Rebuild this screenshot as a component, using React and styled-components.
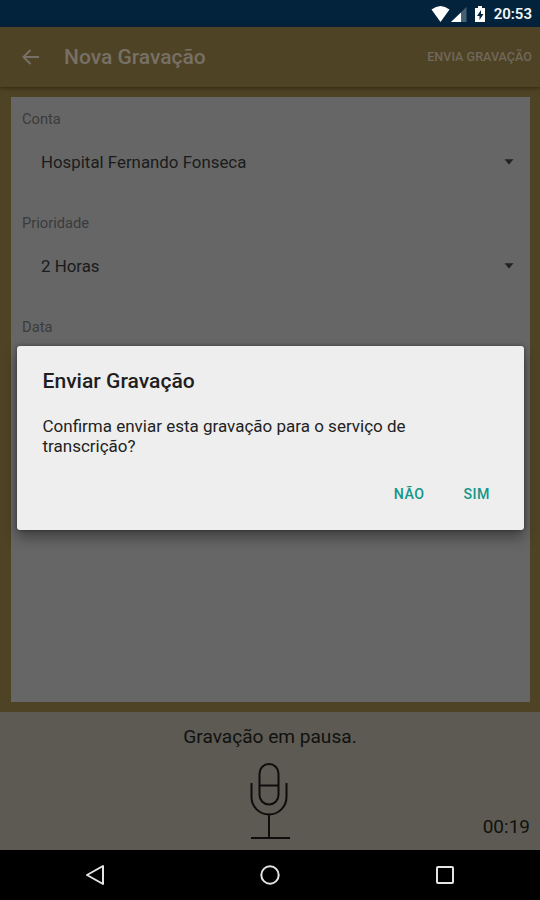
import React from "react";
import styled, { createGlobalStyle } from "styled-components";

const GlobalStyle = createGlobalStyle`
  * { box-sizing: border-box; }
  body { margin: 0; background: #000; font-family: Roboto, sans-serif; }
`;

const Screen = styled.div`
  position: relative;
  width: 540px;
  height: 900px;
  display: flex;
  flex-direction: column;
  overflow: hidden;
  background: #4f4325;
`;

const StatusBar = styled.div`
  flex: none;
  height: 27px;
  display: flex;
  align-items: center;
  justify-content: flex-end;
  padding: 1px 8px 0 0;
  background: #03233d;
`;

const StatusIcons = styled.svg`
  display: block;
  margin-right: 7px;
`;

const Clock = styled.span`
  font-size: 15px;
  font-weight: 600;
  line-height: 20px;
  color: #f4f6f7;
  white-space: nowrap;
`;

const AppBar = styled.header`
  flex: none;
  height: 60px;
  display: flex;
  align-items: center;
  padding: 0 8px 0 22px;
  background: #4f4325;
  box-shadow: 0 1px 4px rgba(30, 22, 4, 0.65);
`;

const BackIcon = styled.svg`
  flex: none;
  margin-right: 25px;
`;

const Title = styled.h1`
  margin: 0;
  flex: 1;
  font-size: 21px;
  font-weight: 500;
  line-height: 28px;
  color: #777066;
`;

const SendAction = styled.button`
  border: 0;
  padding: 0;
  background: none;
  font: 500 12.6px/18px Roboto, sans-serif;
  color: #70685b;
`;

const Card = styled.main`
  flex: none;
  height: 605px;
  margin: 10px 10.5px 10px 11px;
  padding: 12px 16px 0 11px;
  background: #666;
`;

const Field = styled.section`
  height: 104px;
`;

const Label = styled.div`
  font-size: 14.7px;
  line-height: 21px;
  color: #3b3b3b;
`;

const Select = styled.div`
  display: flex;
  align-items: center;
  justify-content: space-between;
  padding: 0 0 0 19px;
  margin-top: 20px;
  height: 24px;
  font-size: 16.85px;
  color: #1b1b1b;
`;

const Recorder = styled.footer`
  flex: none;
  height: 138px;
  display: grid;
  grid-template-columns: 1fr 76px 1fr;
  grid-template-rows: 50px 88px;
  background: #5c5a53;
`;

const RecorderStatus = styled.div`
  grid-column: 1 / -1;
  text-align: center;
  font-size: 19.1px;
  line-height: 50px;
  color: #11110f;
`;

const MicIcon = styled.svg`
  grid-column: 2;
  display: block;
`;

const Elapsed = styled.div`
  align-self: end;
  text-align: right;
  padding: 0 10px 11px 0;
  font-size: 19px;
  line-height: 24px;
  color: #11110f;
`;

const NavBar = styled.nav`
  flex: none;
  height: 50px;
  display: grid;
  grid-template-columns: 1fr 1fr 1fr;
  place-items: center;
  padding: 0 7px 0 7px;
  background: #000;
`;

const Dialog = styled.div`
  position: absolute;
  left: 17px;
  top: 346px;
  width: 507px;
  height: 184px;
  padding: 22px 20px 0 25.5px;
  border-radius: 3px;
  background: #eee;
  box-shadow: 0 8px 14px rgba(0, 0, 0, 0.35), 0 0 4px rgba(0, 0, 0, 0.4);
`;

const DialogTitle = styled.h2`
  margin: 0;
  font-size: 21.1px;
  font-weight: 500;
  line-height: 26px;
  color: #1e1e1e;
`;

const DialogText = styled.p`
  margin: 21.5px 0 0;
  width: 400px;
  font-size: 17px;
  line-height: 20px;
  color: #222;
`;

const DialogActions = styled.div`
  display: flex;
  justify-content: flex-end;
  gap: 11px;
  margin-top: 20.5px;
`;

const DialogButton = styled.button`
  border: 0;
  padding: 8px 14px;
  background: none;
  font: 500 14.2px/20px Roboto, sans-serif;
  letter-spacing: 0.5px;
  color: #159688;
`;

const Caret = () => (
  <svg width="10" height="6" viewBox="0 0 10 6">
    <path d="M.5.3h9L5 5.5z" fill="#222" />
  </svg>
);

const fields = [
  { label: "Conta", value: "Hospital Fernando Fonseca" },
  { label: "Prioridade", value: "2 Horas" },
  { label: "Data" },
];

export default function App() {
  return (
    <Screen>
      <GlobalStyle />
      <StatusBar>
        <StatusIcons width="56" height="20" viewBox="0 0 56 20">
          <path d="M.5 5.5Q9.5-1.5 18.5 5.5L9.5 18z" fill="#fff" />
          <path d="M35.5 3v15H20z" fill="#456176" />
          <path d="M30 8.5V18H20z" fill="#fff" />
          <path d="M47 2h4v2h3v14H44V4h3z" fill="#fff" />
          <path d="M50 6l-4 6h2.5v4l4-6H50z" fill="#03233d" />
        </StatusIcons>
        <Clock>20:53</Clock>
      </StatusBar>
      <AppBar>
        <BackIcon width="17" height="16" viewBox="0 0 17 16" fill="none" stroke="#777066" strokeWidth="2">
          <path d="M17 8H1.5M8.5 1l-7 7 7 7" />
        </BackIcon>
        <Title>Nova Gravação</Title>
        <SendAction>ENVIA GRAVAÇÃO</SendAction>
      </AppBar>
      <Card>
        {fields.map(({ label, value }) => (
          <Field key={label}>
            <Label>{label}</Label>
            {value && (
              <Select>
                {value}
                <Caret />
              </Select>
            )}
          </Field>
        ))}
      </Card>
      <Recorder>
        <RecorderStatus>Gravação em pausa.</RecorderStatus>
        <MicIcon width="76" height="88" viewBox="232 762 76 88" fill="none" stroke="#0d0d0c" strokeWidth="2">
          <rect x="259.5" y="764" width="19" height="40.5" rx="9.5" />
          <path d="M259.5 785.5h19M251.5 783v14a17.5 17.5 0 0 0 35 0v-14M269 814.5V838M251 838h39" />
        </MicIcon>
        <Elapsed>00:19</Elapsed>
      </Recorder>
      <NavBar>
        <svg width="20" height="22" viewBox="0 0 20 22" fill="none" stroke="#e4e4e4" strokeWidth="2">
          <path d="M18 2v18L2 11z" strokeLinejoin="round" />
        </svg>
        <svg width="20" height="20" viewBox="0 0 20 20" fill="none" stroke="#e4e4e4" strokeWidth="2">
          <circle cx="10" cy="10" r="8.7" />
        </svg>
        <svg width="18" height="18" viewBox="0 0 18 18" fill="none" stroke="#e4e4e4" strokeWidth="2">
          <rect x="1" y="1" width="16" height="16" rx="1" />
        </svg>
      </NavBar>
      <Dialog role="dialog">
        <DialogTitle>Enviar Gravação</DialogTitle>
        <DialogText>Confirma enviar esta gravação para o serviço de transcrição?</DialogText>
        <DialogActions>
          <DialogButton>NÃO</DialogButton>
          <DialogButton>SIM</DialogButton>
        </DialogActions>
      </Dialog>
    </Screen>
  );
}
